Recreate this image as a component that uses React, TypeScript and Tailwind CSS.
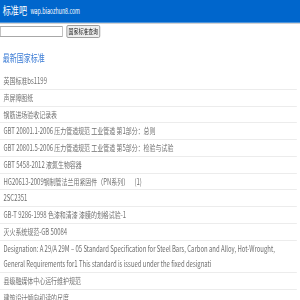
const items = [
  '英国标准bs1199',
  '声屏障图纸',
  '钢筋进场验收记录表',
  'GBT 20801.1-2006 压力管道规范 工业管道 第1部分：总则',
  'GBT 20801.5-2006 压力管道规范 工业管道 第5部分：检验与试验',
  'GBT 5458-2012 液氮生物容器',
  'HG20613-2009钢制管法兰用紧固件（PN系列）\u00a0\u00a0\u00a0\u00a0(1)',
  '2SC2351',
  'GB-T 9286-1998 色漆和清漆 漆膜的划格试验-1',
  '灭火系统规范-GB 50084',
  'Designation: A 29/A 29M – 05 Standard Specification for Steel Bars, Carbon and Alloy, Hot-Wrought, General Requirements for1 This standard is issued under the fixed designati',
  '县级融媒体中心运行维护规范',
  '建筑设计倾向初读的尺度',
];

export default function App() {
  return (
    <div className="h-[300px] w-[300px] overflow-hidden bg-white">
      {/* the source shot is squeezed sideways, so lay out wide and scale */}
      <div className="w-[429px] origin-top-left scale-x-[0.7] font-['Noto_Sans_CJK_SC',sans-serif]">
        {/* Header */}
        <div className="flex h-[23px] items-center border-b border-[#4d94db] bg-[#0066cc] pl-[4px] text-white">
          <span className="text-[11.5px] leading-none">标准吧</span>
          <span className="ml-[5px] text-[7.5px] leading-none">wap.biaozhun8.com</span>
        </div>
        <div className="h-px bg-[#d2d2d2]" />

        {/* Search */}
        <div className="mt-[1px] flex items-center gap-[5px]">
          <input className="h-[11px] w-[90px] border border-[#a8a8a8] bg-white outline-none" />
          <button className="h-[13px] rounded-[2px] border border-[#8f8f8f] bg-[#efefef] px-[2px] text-[7px] leading-none text-[#222]">
            国家标准查询
          </button>
        </div>

        <h2 className="mt-[12px] pl-[4px] text-[10px] leading-[16px] text-[#3a7bd5]">最新国家标准</h2>

        {/* List */}
        <ul className="mt-[7px] mr-[5px]">
          {items.map((t) => (
            <li key={t} className="border-b border-[#ececec] px-[5px] text-[8.5px] leading-[15.75px] text-[#6f6f6f]">
              {t}
            </li>
          ))}
        </ul>
      </div>
    </div>
  );
}
